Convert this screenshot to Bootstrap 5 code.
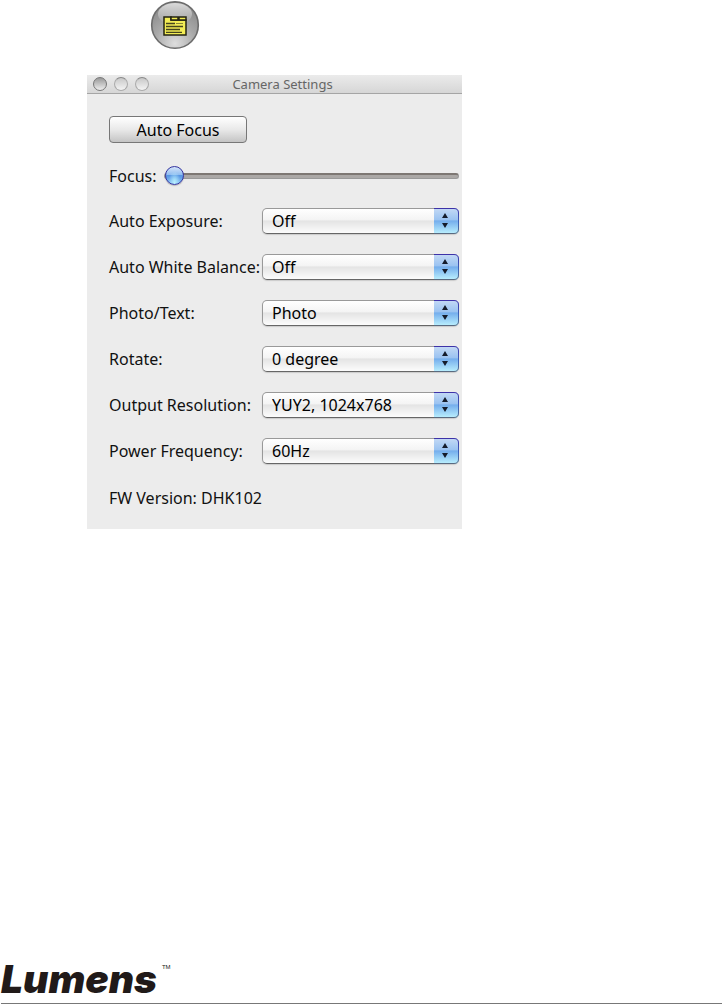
<!DOCTYPE html>
<html lang="en">
<head>
<meta charset="utf-8">
<meta name="viewport" content="width=device-width, initial-scale=1">
<title>Camera Settings</title>
<link href="https://cdn.jsdelivr.net/npm/bootstrap@5.3.0/dist/css/bootstrap.min.css" rel="stylesheet">
<style>
body { font-family: "Noto Sans", "Open Sans", sans-serif; font-size: 16px; line-height: 20px; color: #111; background: #fff; }
.content-col { width: 100%; max-width: 462px; padding-left: 87px; }
.tool-icon { width: 50px; height: 50px; margin-left: 63px; }
.window-panel { background: #ececec; margin-top: 25px; padding-bottom: 21px; }
.title-bar { height: 19px; background: linear-gradient(#ebebeb, #d6d6d6); border-bottom: 1px solid #a5a5a5; font-size: 13px; line-height: 18px; color: #666; }
.lights { left: 6px; top: 2px; gap: 7px; }
.light { width: 14px; height: 14px; border: 1px solid #aaa; border-top-color: #888; border-radius: 50%; background: linear-gradient(#c8c8c8, #f4f4f4); }
.light-first { border-color: #777; background: linear-gradient(#999, #eee); }
.panel-body { padding: 22px 3px 0 22px; }
.btn-aqua { width: 138px; height: 27px; padding: 0; border: 1px solid #777; border-radius: 4px; background: linear-gradient(#fff, #e9e9e9 50%, #c4c4c4); font-size: 16px; line-height: 24px; color: #000; }
.focus-row { height: 44px; margin-top: 11px; gap: 7px; }
.slider { appearance: none; -webkit-appearance: none; height: 22px; margin: 0; background: none; min-width: 0; }
.slider::-webkit-slider-runnable-track { height: 6px; border: 1px solid #999; border-top: 2px solid #7d7773; border-radius: 3px; background: #aba8a6; }
.slider::-webkit-slider-thumb { -webkit-appearance: none; width: 19px; height: 19px; margin-top: -9px; border: 1px solid #3434a0; border-radius: 50%; background: radial-gradient(ellipse at 50% 90%, #b8f0ff, transparent 50%), linear-gradient(#d5e5fa, #91bdf0 45%, #5896e4 50%, #8ac4f5); box-shadow: 0 1px 1px #8888; }
.setting { height: 46px; }
.setting-name { width: 153px; flex: none; }
.popup { height: 26px; padding: 0 30px 0 9px; border: 1px solid #999; border-bottom-color: #666; border-radius: 5px; font-family: inherit; font-size: 16px; line-height: 22px; color: #000; appearance: none; -webkit-appearance: none; background: linear-gradient(#fff, #f4f4f4 45%, #e4e4e4 50%, #fcfcfc); box-shadow: 0 1px 1px #9996; }
.stepper { right: 0; top: 0; width: 25px; height: 26px; pointer-events: none; }
.brand { font-family: Inter, sans-serif; font-weight: 900; font-style: italic; font-size: 39px; line-height: 40px; color: #211a19; }
.brand-tm { font-family: "Liberation Sans", sans-serif; font-size: 6px; line-height: 8px; color: #211a19; margin: 4px 0 0 5px; }
.page-foot { border-bottom: 1px solid #777; margin: 0 1px; padding-bottom: 4px; }
.firmware { padding-top: 14px; }
</style>
</head>
<body class="d-flex flex-column min-vh-100">
<svg width="0" height="0" class="position-absolute" aria-hidden="true">
  <defs>
    <linearGradient id="stepFill" x2="0" y2="1"><stop stop-color="#c5daf5"/><stop offset=".45" stop-color="#9bc3f1"/><stop offset=".5" stop-color="#75aeec"/><stop offset="1" stop-color="#bdf2ff"/></linearGradient>
    <linearGradient id="stepEdge" x2="0" y2="1"><stop stop-color="#3e32a8"/><stop offset=".6" stop-color="#3c65b8"/><stop offset="1" stop-color="#5a6a80"/></linearGradient>
    <symbol id="stepper" viewBox="0 0 25 26">
      <path d="M0 0H20Q25 0 25 5V21Q25 26 20 26H0Z" fill="url(#stepFill)"/>
      <path d="M0 .5H20Q24.500 .5 24.500 5V21Q24.500 25.500 20 25.500H0" fill="none" stroke="url(#stepEdge)"/>
      <path d="M8 10L11 5L14 10ZM8 15H14L11 20Z" fill="#151c2b"/>
    </symbol>
  </defs>
</svg>
<main class="content-col">
  <svg class="tool-icon d-block" viewBox="0 0 50 50" role="img" aria-label="Camera settings">
    <defs>
      <radialGradient id="orb" cx=".5" cy=".9" r=".9"><stop stop-color="#dedede"/><stop offset=".5" stop-color="#a8a8a8"/><stop offset="1" stop-color="#858585"/></radialGradient>
      <linearGradient id="shine" x2="0" y2="1"><stop stop-color="#fff" stop-opacity=".7"/><stop offset="1" stop-color="#fff" stop-opacity="0"/></linearGradient>
    </defs>
    <circle cx="25" cy="25" r="23.300" fill="url(#orb)" stroke="#6c6c6c" stroke-width="1.600"/>
    <ellipse cx="25" cy="14" rx="17" ry="11" fill="url(#shine)"/>
    <path d="M14 17H21V20H36V35H14Z" fill="#f3ed55" stroke="#252512" stroke-width="1.500"/>
    <path d="M21 17H28V20H21ZM29 17H36V20H29Z" fill="#f3ed55" stroke="#252512" stroke-width="1.500"/>
    <path d="M16 23.500H25M16 26.500H33M16 29.500H30M16 32.300H32" stroke="#45451d" stroke-width="1.300"/>
    <path d="M26 23.500H33" stroke="#8a8735" stroke-width="1"/>
  </svg>
  <section class="window-panel">
    <header class="title-bar position-relative text-center">
      <div class="lights position-absolute d-flex"><span class="light light-first"></span><span class="light"></span><span class="light"></span></div>
      <span class="ms-3">Camera Settings</span>
    </header>
    <form class="panel-body">
      <button type="button" class="btn btn-aqua d-block">Auto Focus</button>
      <div class="focus-row d-flex align-items-center">
        <label for="focus">Focus:</label>
        <input class="slider flex-grow-1" type="range" id="focus" min="0" max="100" value="0">
      </div>
      <div class="setting d-flex align-items-center">
        <label class="setting-name" for="exposure">Auto Exposure:</label>
        <div class="position-relative flex-grow-1"><select class="popup w-100 d-block" id="exposure"><option>Off</option><option>On</option></select><svg class="stepper position-absolute" aria-hidden="true"><use href="#stepper"/></svg></div>
      </div>
      <div class="setting d-flex align-items-center">
        <label class="setting-name" for="balance">Auto White Balance:</label>
        <div class="position-relative flex-grow-1"><select class="popup w-100 d-block" id="balance"><option>Off</option><option>On</option></select><svg class="stepper position-absolute" aria-hidden="true"><use href="#stepper"/></svg></div>
      </div>
      <div class="setting d-flex align-items-center">
        <label class="setting-name" for="mode">Photo/Text:</label>
        <div class="position-relative flex-grow-1"><select class="popup w-100 d-block" id="mode"><option>Photo</option><option>Text</option></select><svg class="stepper position-absolute" aria-hidden="true"><use href="#stepper"/></svg></div>
      </div>
      <div class="setting d-flex align-items-center">
        <label class="setting-name" for="rotate">Rotate:</label>
        <div class="position-relative flex-grow-1"><select class="popup w-100 d-block" id="rotate"><option>0 degree</option><option>180 degree</option></select><svg class="stepper position-absolute" aria-hidden="true"><use href="#stepper"/></svg></div>
      </div>
      <div class="setting d-flex align-items-center">
        <label class="setting-name" for="resolution">Output Resolution:</label>
        <div class="position-relative flex-grow-1"><select class="popup w-100 d-block" id="resolution"><option>YUY2, 1024x768</option></select><svg class="stepper position-absolute" aria-hidden="true"><use href="#stepper"/></svg></div>
      </div>
      <div class="setting d-flex align-items-center">
        <label class="setting-name" for="power">Power Frequency:</label>
        <div class="position-relative flex-grow-1"><select class="popup w-100 d-block" id="power"><option>60Hz</option><option>50Hz</option></select><svg class="stepper position-absolute" aria-hidden="true"><use href="#stepper"/></svg></div>
      </div>
      <div class="firmware">FW Version: DHK102</div>
    </form>
  </section>
</main>
<footer class="page-foot d-flex align-items-start mt-auto">
  <span class="brand">Lumens</span><span class="brand-tm">TM</span>
</footer>
<script src="https://cdn.jsdelivr.net/npm/bootstrap@5.3.0/dist/js/bootstrap.bundle.min.js"></script>
</body>
</html>
